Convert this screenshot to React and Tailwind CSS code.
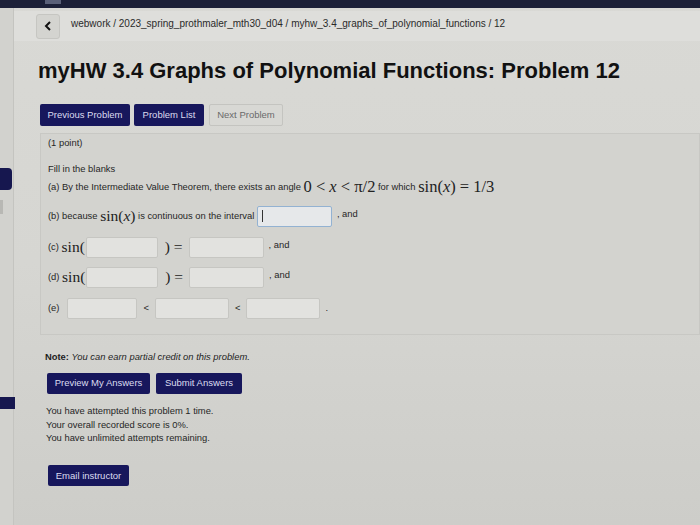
import React from 'react';

const sans = { fontFamily: '"Liberation Sans", Arial, sans-serif' };

const M = ({ children, big }) => (
  <span
    className={`${big ? 'text-[16.5px]' : 'text-[15.5px]'} text-[#222]`}
    style={{ fontFamily: '"Liberation Serif", "DejaVu Serif", serif' }}
  >
    {children}
  </span>
);
const I = ({ children }) => <i className="italic">{children}</i>;

const Blank = ({ w = 'w-[74px]', focused }) => (
  <span
    className={`inline-flex items-center h-[21px] ${w} rounded-[2px] border ${
      focused ? 'border-[#93b2d2] bg-[#e6e8ea]' : 'border-[#c6c6c2] bg-[#e2e2df]'
    } px-[4px] align-middle`}
  >
    {focused && <span className="w-px h-[12px] bg-[#333]" />}
  </span>
);

const NavyBtn = ({ children, className = '' }) => (
  <button className={`h-[21px] whitespace-nowrap rounded-[2px] bg-[#17175c] text-[9.5px] text-[#dcdcf0] ${className}`}>
    {children}
  </button>
);

const App = () => {
  return (
    <div
      className="w-[700px] h-[525px] overflow-hidden bg-gradient-to-b from-[#d9d9d5] via-[#d6d6d2] to-[#cdcdc9] text-[#262626]"
      style={sans}
    >
      {/* top strip */}
      <div className="h-[8px] bg-[#1c2038] flex">
        <div className="ml-[45px] w-[16px] h-[4px] bg-[#5a6078]" />
      </div>
      <div className="flex h-[517px]">
        {/* sidebar edge */}
        <div className="w-[14px] shrink-0 border-r border-[#c4c4c0] bg-[#d2d2ce] flex flex-col">
          <div className="h-[160px]" />
          <div className="h-[22px] w-[12px] rounded-r-[4px] bg-[#16174f]" />
          <div className="mt-[10px] h-[14px] w-[3px] bg-[#b8b8b4]" />
          <div className="h-[183px]" />
          <div className="h-[12px] w-[15px] bg-[#16174f]" />
        </div>
        <div className="flex-1 flex flex-col">
          {/* breadcrumb */}
          <div className="mt-[3px] h-[30px] bg-[#dededb] flex items-center pl-[22px]">
            <div className="w-[24px] h-[25px] rounded-[3px] border border-[#c6c6c2] bg-[#d4d4d0] flex items-center justify-center">
              <svg width="8" height="10" viewBox="0 0 8 10">
                <path d="M6 1 L2 5 L6 9" fill="none" stroke="#111" strokeWidth="2" />
              </svg>
            </div>
            <span className="ml-[11px] text-[10px] text-[#2a2a2a] -mt-[5px]">
              webwork / 2023_spring_prothmaler_mth30_d04 / myhw_3.4_graphs_of_polynomial_functions / 12
            </span>
          </div>

          {/* title */}
          <h1 className="mt-[17px] ml-[24px] text-[22px] leading-[26px] font-bold text-[#111]">
            myHW 3.4 Graphs of Polynomial Functions: Problem 12
          </h1>

          {/* nav buttons */}
          <div className="mt-[20px] ml-[26px] flex gap-[4px]">
            <NavyBtn className="h-[22px] w-[90px]">Previous Problem</NavyBtn>
            <NavyBtn className="h-[22px] w-[70px]">Problem List</NavyBtn>
            <button className="ml-[1px] h-[22px] w-[74px] whitespace-nowrap rounded-[2px] border border-[#c4c4c0] bg-[#d8d8d4] text-[9.5px] text-[#6a6a6a]">
              Next Problem
            </button>
          </div>

          {/* problem box */}
          <div className="mt-[7px] ml-[26px] h-[202px] border border-[#c8c8c4] bg-[#d3d3cf] pl-[7px] pt-[3px] text-[9.4px] text-[#262626]">
            <div className="h-[12px] flex items-center">(1 point)</div>
            <div className="mt-[14px] h-[12px] flex items-center">Fill in the blanks</div>
            <div className="mt-[2px] flex items-center h-[20px] whitespace-nowrap">
              (a) By the Intermediate Value Theorem, there exists an angle&nbsp;
              <M big>
                0 &lt; <I>x</I> &lt; π/2
              </M>
              &nbsp;for which&nbsp;
              <M big>
                sin(<I>x</I>) = 1/3
              </M>
            </div>
            <div className="mt-[8px] flex items-center h-[22px] whitespace-nowrap">
              (b) because&nbsp;
              <M>
                sin(<I>x</I>)
              </M>
              &nbsp;is continuous on the interval&nbsp;
              <Blank w="w-[75px]" focused />
              <span className="ml-[5px] -mt-[4px]">, and</span>
            </div>
            <div className="mt-[9px] flex items-center h-[22px]">
              (c)&nbsp;<M>sin(</M>
              <span className="ml-[1px]"><Blank w="w-[72px]" /></span>
              <span className="ml-[7px]"><M>) =</M></span>
              <span className="ml-[6px]"><Blank w="w-[75px]" /></span>
              <span className="ml-[5px] -mt-[4px]">, and</span>
            </div>
            <div className="mt-[8px] flex items-center h-[22px]">
              (d)&nbsp;<M>sin(</M>
              <span className="ml-[1px]"><Blank w="w-[72px]" /></span>
              <span className="ml-[7px]"><M>) =</M></span>
              <span className="ml-[6px]"><Blank w="w-[75px]" /></span>
              <span className="ml-[5px] -mt-[4px]">, and</span>
            </div>
            <div className="mt-[9px] flex items-center h-[22px]">
              (e)
              <span className="ml-[8px]"><Blank w="w-[70px]" /></span>
              <span className="mx-[6px]">&lt;</span>
              <Blank w="w-[74px]" />
              <span className="mx-[6px]">&lt;</span>
              <Blank w="w-[74px]" />
              <span className="ml-[5px]">.</span>
            </div>
          </div>

          {/* note */}
          <div className="mt-[15px] ml-[31px] text-[9.4px] text-[#1e1e1e]">
            <b>Note:</b> <i>You can earn partial credit on this problem.</i>
          </div>

          <div className="mt-[9px] ml-[33px] flex gap-[6px]">
            <NavyBtn className="w-[103px]">Preview My Answers</NavyBtn>
            <NavyBtn className="w-[86px]">Submit Answers</NavyBtn>
          </div>

          <div className="mt-[10px] ml-[32px] text-[9.4px] leading-[13.5px] text-[#262626]">
            <div>You have attempted this problem 1 time.</div>
            <div>Your overall recorded score is 0%.</div>
            <div>You have unlimited attempts remaining.</div>
          </div>

          <div className="mt-[17px] ml-[34px]">
            <NavyBtn className="w-[81px]">Email instructor</NavyBtn>
          </div>
        </div>
      </div>
    </div>
  );
};

export default App;
